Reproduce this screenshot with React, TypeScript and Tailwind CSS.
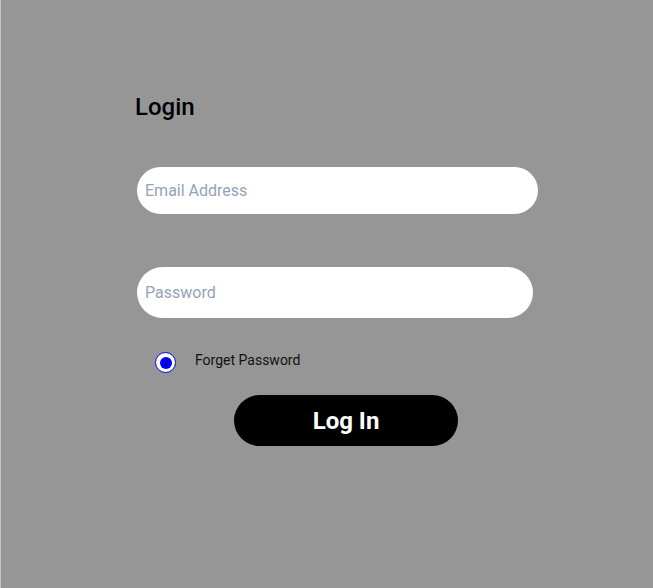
import React from "react";

export default function App() {
  return (
    <div
      className="w-[653px] h-[588px] bg-[#969696] border-l border-[#c4c4c4] overflow-hidden"
      style={{ fontFamily: "Roboto, 'Liberation Sans', sans-serif" }}
    >
      <div className="pl-[134px] pt-[92px] flex flex-col items-start">
        <h1 className="text-[24px] font-medium leading-[30px] text-black">Login</h1>
        <input
          type="email"
          placeholder="Email Address"
          className="mt-[45px] ml-[2px] w-[401px] h-[47px] rounded-full bg-white px-[8px] text-[16px] text-black placeholder:text-[#94a3b8] outline-none"
        />
        <input
          type="password"
          placeholder="Password"
          className="mt-[53px] ml-[2px] w-[396px] h-[51px] rounded-full bg-white px-[8px] text-[16px] text-black placeholder:text-[#94a3b8] outline-none"
        />
        <div className="mt-[34px] ml-[20px] flex items-center">
          <span className="w-[21px] h-[21px] rounded-full border-[1.5px] border-[#0000ee] bg-white flex items-center justify-center">
            <span className="w-[12px] h-[12px] rounded-full bg-[#0000ee]" />
          </span>
          <span className="ml-[19px] text-[14px] leading-[20px] text-[#111] -mt-[6px]">Forget Password</span>
        </div>
        <button className="mt-[22px] ml-[99px] w-[224px] h-[51px] rounded-full bg-black text-white text-[24px] font-bold">
          Log In
        </button>
      </div>
    </div>
  );
}
